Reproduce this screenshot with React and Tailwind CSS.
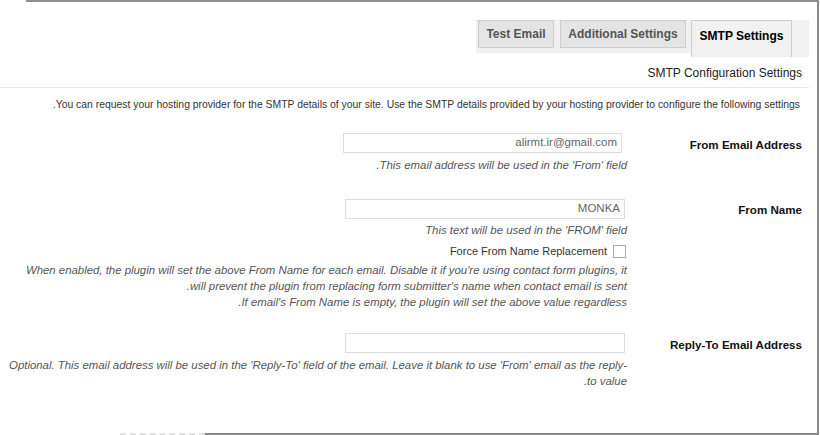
export default function App() {
  const font = { fontFamily: '"Liberation Sans", Arial, sans-serif' };
  return (
    <div className="w-[820px] h-[435px] bg-white relative flex flex-col text-[#333]" style={font}>
      {/* frame lines */}
      <div className="ml-[26px] mr-[1px] h-[2px] bg-[#8f8f8f] shrink-0" />
      <div className="flex-1 flex flex-col border-r-2 border-[#8a8a8a] mr-[1px]">
        {/* tabs */}
        <div className="flex justify-end pr-[8px] pt-[18px] items-start">
          <div className="bg-[#f1f1f1] h-[33px] flex items-start pl-[2px] pr-[5px] gap-[6px]">
            <div className="h-[28px] w-[76px] border border-[#ccc] bg-[#e4e4e4] flex items-center justify-center text-[12px] font-bold text-[#555]">
              Test Email
            </div>
            <div className="h-[28px] w-[126px] border border-[#ccc] bg-[#e4e4e4] flex items-center justify-center text-[12px] font-bold text-[#555]">
              Additional Settings
            </div>
          </div>
          <div className="bg-[#f1f1f1] h-[37px] flex items-start pr-[17px]">
            <div className="h-[37px] w-[101px] border border-b-0 border-[#ccc] bg-[#f1f1f1] flex items-start pt-[6px] justify-center text-[12px] font-bold text-black">
              SMTP Settings
            </div>
          </div>
        </div>
        <div className="flex justify-end pr-[15px] mt-[8px] text-[12px] text-[#222] h-[16px] leading-[16px]">
          SMTP Configuration Settings
        </div>
        <div className="h-[1px] bg-[#e9e9e9] mt-[6px] mr-[8px]" />
        <div className="flex justify-end pr-[17px] mt-[9px] text-[10.4px] h-[16px] leading-[16px] text-[#333]">
          .You can request your hosting provider for the SMTP details of your site. Use the SMTP details provided by your hosting provider to configure the following settings
        </div>

        {/* row 1 */}
        <div className="grid grid-cols-[627px_183px] mt-[20px]">
          <div className="flex flex-col items-end">
            <div className="w-[279px] h-[20px] mr-[5px] border border-[#ddd] flex items-center justify-end pr-[4px] text-[11.5px] text-[#666]">
              alirmt.ir@gmail.com
            </div>
            <div className="mt-[4px] h-[16px] leading-[16px] text-[11.4px] italic text-[#555]">
              .This email address will be used in the 'From' field
            </div>
          </div>
          <div className="flex justify-end pr-[8px] pt-[4px] text-[11.6px] font-bold text-[#111] h-[16px] leading-[16px] box-content">
            From Email Address
          </div>
        </div>

        {/* row 2 */}
        <div className="grid grid-cols-[627px_183px] mt-[26px]">
          <div className="flex flex-col items-end">
            <div className="w-[280px] h-[20px] mr-[2px] border border-[#ddd] flex items-center justify-end pr-[4px] text-[11.5px] text-[#666]">
              MONKA
            </div>
            <div className="mt-[3px] h-[16px] leading-[16px] text-[11.4px] italic text-[#555]">
              This text will be used in the 'FROM' field
            </div>
            <div className="mt-[5px] h-[16px] flex items-center gap-[6px] text-[11px] text-[#333]">
              <span>Force From Name Replacement</span>
              <span className="w-[13px] h-[13px] border border-[#aaa] bg-white mr-[1px]" />
            </div>
            <div className="mt-[3px] text-[11.4px] italic text-[#555] leading-[16px] text-right">
              <div>When enabled, the plugin will set the above From Name for each email. Disable it if you're using contact form plugins, it</div>
              <div>.will prevent the plugin from replacing form submitter's name when contact email is sent</div>
              <div>.If email's From Name is empty, the plugin will set the above value regardless</div>
            </div>
          </div>
          <div className="flex justify-end pr-[8px] pt-[3px] text-[11.6px] font-bold text-[#111] h-[16px] leading-[16px] box-content">
            From Name
          </div>
        </div>

        {/* row 3 */}
        <div className="grid grid-cols-[627px_183px] mt-[23px]">
          <div className="flex flex-col items-end">
            <div className="w-[280px] h-[20px] mr-[2px] border border-[#ddd]" />
            <div className="mt-[4px] text-[11.4px] italic text-[#555] leading-[16px] text-right">
              <div>Optional. This email address will be used in the 'Reply-To' field of the email. Leave it blank to use 'From' email as the reply-</div>
              <div>.to value</div>
            </div>
          </div>
          <div className="flex justify-end pr-[8px] pt-[4px] text-[11.6px] font-bold text-[#111] h-[16px] leading-[16px] box-content">
            Reply-To Email Address
          </div>
        </div>
      </div>
      <div className="flex shrink-0 h-[2px] mr-[1px]">
        <div className="ml-[120px] w-[85px] border-t-2 border-dashed border-[#e0e0e0]" />
        <div className="flex-1 bg-[#8a8a8a]" />
      </div>
    </div>
  );
}
